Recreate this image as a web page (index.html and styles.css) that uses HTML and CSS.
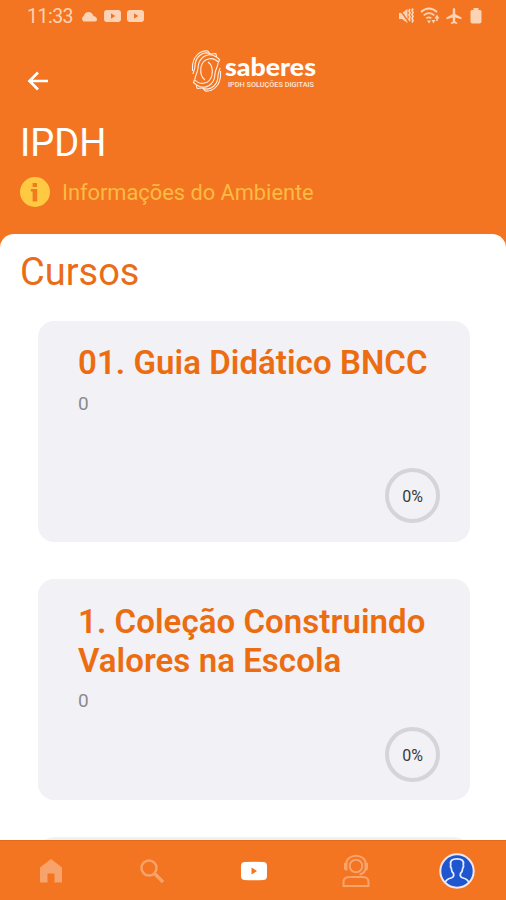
FILE: index.html
```html
<!DOCTYPE html>
<html lang="pt-BR">
<head>
  <meta charset="UTF-8">
  <meta name="viewport" content="width=device-width, initial-scale=1.0">
  <title>Saberes - IPDH</title>
  <link rel="stylesheet" href="styles.css">
</head>
<body>

<div class="app">
  <header class="header">
    <div class="status-bar">
      <span class="clock">11:33</span>
      <svg class="status-left" width="66" height="14" viewBox="0 0 66 14">
        <path d="M3.500 12.500a3.200 3.200 0 0 1 .2-5.500Q5 3 8.500 3t5 4q3.500 1 3.500 3.500 0 2-2 2z"/>
        <path fill-rule="evenodd" d="M27 1h11q3 0 3 3v6q0 3-3 3H27q-3 0-3-3V4q0-3 3-3zM31 4.300v5.400L35.300 7z"/>
        <path fill-rule="evenodd" d="M50 1h11q3 0 3 3v6q0 3-3 3H50q-3 0-3-3V4q0-3 3-3zM54 4.300v5.400L58.300 7z"/>
      </svg>
      <div class="status-right">
        <svg width="17" height="18" viewBox="0 0 17 18">
          <path d="M1 6h3l5.500-4v14L4 12H1z"/>
          <path class="cut" d="M1 1.500l10 14"/>
          <path class="line" d="M12 2l-1 2 1 2-1 2 1 2-1 2 1 2M15 1.500l-1 2 1 2-1 2 1 2-1 2 1 2-1 2"/>
        </svg>
        <svg width="21" height="18" viewBox="0 0 21 18">
          <path class="line" d="M1 5q8-7 16 0M3.700 8.300q5.300-4.500 10.600 0M6.300 11.400q2.700-2 5 0"/>
          <path d="M9 16.500l-2-3h4zM11.500 13h4l-2 3.500zM14.500 11.500l2.500-4 2.500 4h-1.700v2.500h-1.600v-2.500z"/>
        </svg>
        <svg width="16" height="18" viewBox="0 0 16 18">
          <path d="M6.800 2q1.200-2 2.400 0v5L15.500 10.500v1.800L9.200 10.500v4l2 1.300V17L8 16.200 4.800 17v-1.200l2-1.300v-4L.5 12.300v-1.800L6.800 7z"/>
        </svg>
        <svg class="battery" width="12" height="18" viewBox="0 0 12 18">
          <path d="M3.500 1h5v2H10q1.500 0 1.500 1.500v10q0 2-2 2h-7q-2 0-2-2v-10Q.5 3 2 3h1.500z"/>
        </svg>
      </div>
    </div>

    <div class="toolbar">
      <svg class="back" width="22" height="22" viewBox="0 0 22 22">
        <path d="M11 2.500L2.500 11l8.500 8.500M2.500 11H21"/>
      </svg>
      <svg class="logo" width="130" height="44" viewBox="0 0 130 44">
        <g class="swirl">
          <path d="M17 2C8 1 1.500 9 1.500 18V22M20 5C11 1 4 9 4 17 4 20 2.500 22 2 25"/>
          <path d="M17 2l2 3M20 5l5-.5M25 4.500l.5 3.500M25.500 8C16 2 7.500 9 7 19 6.500 25 4 26 4 30"/>
          <path d="M25.500 8l3 2.500-1 3M27.500 13.500C22 7 12 9 10 18 9 25 11 29 14 31"/>
          <path d="M14 42C23 43 29.500 35 29.500 26v-4M11 39C20 43 27 35 27 27 27 24 28.500 22 29 19"/>
          <path d="M14 42l-2-3M11 39l-5 .5M6 39.500L5.500 36M5.500 36C15 42 23.500 35 24 25 24.500 19 27 18 27 14"/>
          <path d="M5.500 36l-3-2.500 1-3M3.500 30.500C9 37 19 35 21 26 22 19 20 15 17 13"/>
        </g>
        <text class="brand" x="34" y="27" textLength="91" lengthAdjust="spacingAndGlyphs">saberes</text>
        <text class="tagline" x="37" y="38" textLength="86" lengthAdjust="spacingAndGlyphs">IPDH SOLUÇÕES DIGITAIS</text>
      </svg>
    </div>

    <h1>IPDH</h1>
    <div class="info">
      <svg width="30" height="30" viewBox="0 0 30 30">
        <circle cx="15" cy="15" r="15"/>
        <path d="M12.600 6h4.400v4h-4.400zM10.800 12h6.400v12.500h-4.600v-10h-1.800z"/>
      </svg>
      <span>Informações do Ambiente</span>
    </div>
  </header>

  <main class="content">
    <h2>Cursos</h2>
    <div class="course">
      <h3>01. Guia Didático BNCC</h3>
      <p>0</p>
      <div class="progress">0%</div>
    </div>
    <div class="course">
      <h3>1. Coleção Construindo Valores na Escola</h3>
      <p>0</p>
      <div class="progress">0%</div>
    </div>
    <div class="course"></div>
  </main>

  <nav class="bottom-nav">
    <a>
      <svg width="24" height="26" viewBox="0 0 24 26">
        <path class="fill" d="M12 1l11 8.500V24.500h-7.500v-9h-7v9H1v-15z"/>
      </svg>
    </a>
    <a>
      <svg width="26" height="26" viewBox="0 0 26 26">
        <circle class="stroke" cx="10" cy="10" r="7.500"/>
        <path class="stroke thick" d="M15.500 15.500L24 24"/>
      </svg>
    </a>
    <a class="active">
      <svg width="28" height="20" viewBox="0 0 28 20">
        <path fill-rule="evenodd" d="M4 1q10-.5 20 0 3 .5 3 4v10q0 3.500-3 4-10 .5-20 0-3-.5-3-4V5q0-3.500 3-4zM11.500 6.500v7L17 10z"/>
      </svg>
    </a>
    <a>
      <svg width="28" height="34" viewBox="0 0 28 34">
        <circle class="stroke thin" cx="14" cy="12" r="6.300"/>
        <path class="stroke thin" d="M4 11C4-1.500 24-1.500 24 11M23.500 15q-1 4.500-6 5.500M1.500 32v-4q0-5 6-5h13q6 0 6 5v4z"/>
        <path class="fill" d="M2 9h3.500v7.500H4q-2 0-2-2zM22.500 9H26v5.500q0 2-2 2h-1.500z"/>
      </svg>
    </a>
    <a>
      <svg width="36" height="36" viewBox="0 0 36 36">
        <circle class="avatar" cx="18" cy="18" r="16.700"/>
        <path class="person" d="M6.500 29q1-2.800 5.500-4 3.500-1 2.500-4.500-2-1.800-2.300-5.500-1.200-1-.5-3.500Q10.500 5.800 18 5.800t6.300 5.700q.7 2.500-.5 3.500-.3 3.700-2.300 5.500-1 3.500 2.500 4.500 4.500 1.200 5.500 4"/>
      </svg>
    </a>
  </nav>
</div>

</body>
</html>
```
FILE: styles.css
```css
* {
  box-sizing: border-box;
}

body {
  margin: 0;
  background: #f37521;
  font-family: Roboto, "Liberation Sans", sans-serif;
}

h1, h2, h3, p {
  margin: 0;
}

svg {
  display: block;
  flex-shrink: 0;
}

.app {
  display: flex;
  flex-direction: column;
  width: 506px;
  height: 900px;
  overflow: hidden;
}

.header {
  height: 234px;
  flex-shrink: 0;
  color: #fff;
}

.status-bar {
  display: flex;
  align-items: center;
  height: 32px;
  padding: 0 24px 0 27px;
  color: #fcd3b5;
  fill: #fcd3b5;
}

.clock {
  width: 53px;
  font-size: 19.5px;
  letter-spacing: -0.5px;
}

.status-right {
  display: flex;
  gap: 5px;
  margin-left: auto;
}

.status-right .line {
  fill: none;
  stroke: #fcd3b5;
  stroke-width: 1.7;
}

.status-right .cut {
  stroke: #f37521;
  stroke-width: 1.4;
}

.battery {
  margin-left: 3px;
}

.toolbar {
  display: flex;
  align-items: center;
  height: 78px;
  padding-left: 27px;
}

.back {
  margin-top: 20px;
  fill: none;
  stroke: #fff;
  stroke-width: 2.7;
}

.logo {
  margin-left: 142px;
  overflow: visible;
}

.swirl {
  fill: none;
  stroke: #fff0e5;
  stroke-width: 1.1;
}

.brand {
  fill: #fff;
  font-family: Lato, sans-serif;
  font-size: 24px;
  font-weight: 900;
}

.tagline {
  fill: #ffe9da;
  font-size: 8px;
  font-weight: 500;
}

h1 {
  padding: 11px 0 0 20px;
  font-size: 38px;
  font-weight: 400;
  line-height: 45px;
}

.info {
  display: flex;
  align-items: center;
  gap: 12px;
  margin-top: 11px;
  padding-left: 20px;
  color: #fcbb43;
  font-size: 21.8px;
}

.info circle {
  fill: #ffca42;
}

.info path {
  fill: #ef7a20;
}

.content {
  flex: 1;
  min-height: 0;
  overflow: hidden;
  padding: 15px 36px 0 38px;
  border-radius: 14px 14px 0 0;
  background: #fff;
}

h2 {
  margin-left: -18px;
  color: #e96d18;
  font-size: 38px;
  font-weight: 400;
  line-height: 47px;
}

.course {
  display: flex;
  flex-direction: column;
  height: 221px;
  margin-top: 25px;
  padding: 22px 30px 19px 40px;
  border-radius: 16px;
  background: #f2f1f6;
}

.course + .course {
  margin-top: 37px;
  padding-top: 23px;
  padding-bottom: 18px;
}

.course h3 {
  color: #ec6d11;
  font-size: 33px;
  font-weight: 600;
  line-height: 39px;
  letter-spacing: 0.06px;
}

.course p {
  margin-top: 10px;
  color: #8b8b90;
  font-size: 19px;
  line-height: 24px;
}

.course + .course p {
  margin-top: 9px;
}

.progress {
  display: flex;
  align-items: center;
  justify-content: center;
  align-self: flex-end;
  width: 55px;
  height: 55px;
  margin-top: auto;
  padding-top: 2px;
  border: 4px solid #d5d5d9;
  border-radius: 50%;
  color: #39393d;
  font-size: 16px;
}

.bottom-nav {
  display: flex;
  height: 60px;
  flex-shrink: 0;
  margin-right: -2px;
  border-top: 1px solid #e46c18;
  background: #f37521;
}

.bottom-nav a {
  display: flex;
  flex: 1;
  align-items: center;
  justify-content: center;
}

.bottom-nav .fill {
  fill: #f8a36b;
}

.bottom-nav .stroke {
  fill: none;
  stroke: #f8a36b;
  stroke-width: 2.4;
}

.bottom-nav .thick {
  stroke-width: 3.2;
}

.bottom-nav .thin {
  stroke-width: 2;
}

.active {
  fill: #fff;
}

.avatar {
  fill: #1f55cf;
  stroke: #f1e6ea;
  stroke-width: 2;
}

.person {
  fill: none;
  stroke: #e3edff;
  stroke-width: 1.8;
}
```
